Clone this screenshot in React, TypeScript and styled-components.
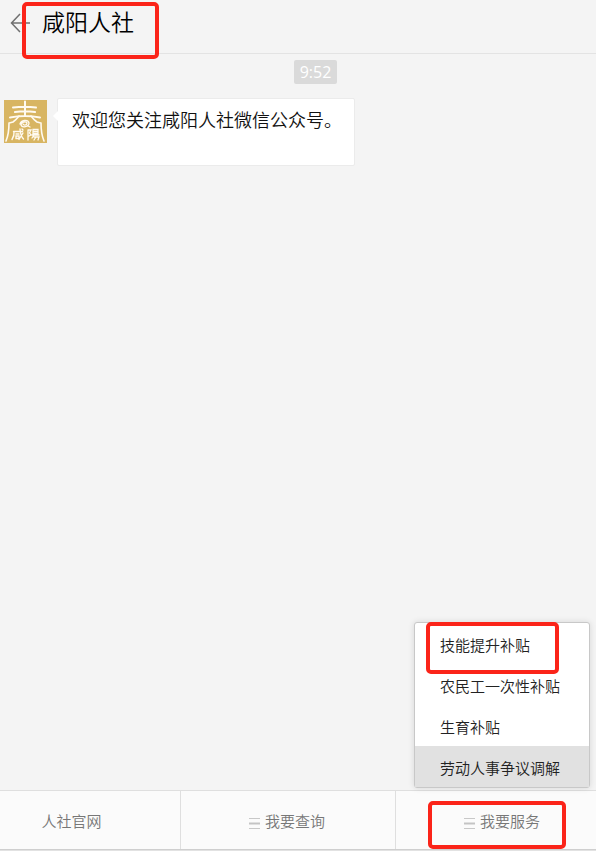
import React from "react";
import styled, { createGlobalStyle, css } from "styled-components";

const GlobalStyle = createGlobalStyle`
  *, *::before, *::after { box-sizing: border-box; }
  body {
    margin: 0;
    background: #f4f4f4;
    color: #111;
    font-family: "Noto Sans CJK SC", "Noto Sans", sans-serif;
    font-weight: 350;
  }
  button { font: inherit; color: inherit; }
`;

const Page = styled.div`
  display: flex;
  flex-direction: column;
  min-height: 100vh;
  overflow: hidden;
`;

const Header = styled.header`
  display: flex;
  align-items: flex-start;
  height: 54px;
  padding-left: 10px;
  border-bottom: 1px solid #e3e3e3;
`;

const BackButton = styled.button`
  display: flex;
  margin: 12px 0 0;
  padding: 0;
  border: 0;
  background: none;
  color: #707070;
`;

const Mark = styled.span<{ $inset: string }>`
  position: absolute;
  inset: ${(p) => p.$inset};
  border: 4px solid #fb2419;
  border-radius: 5px;
  pointer-events: none;
`;

const Title = styled.h1`
  position: relative;
  margin: 4px 0 0 10px;
  font-size: 23px;
  line-height: 34px;
  font-weight: 350;
  color: #000;
`;

const Chat = styled.main`
  display: flex;
  flex: 1;
  flex-direction: column;
  padding: 6px 4px;
`;

const Time = styled.time`
  align-self: center;
  margin-left: 35px;
  padding: 0 6px;
  border-radius: 2px;
  background: #dadada;
  color: #fff;
  font: 400 16px/24px "Open Sans", "Noto Sans", sans-serif;
`;

const Message = styled.div`
  display: flex;
  align-items: flex-start;
  gap: 10px;
  margin-top: 14px;
`;

const Avatar = styled.svg`
  flex: none;
  width: 43px;
  height: 43px;
  margin-top: 2px;
`;

const Bubble = styled.p`
  position: relative;
  min-height: 68px;
  margin: 0;
  padding: 7px 12px 0 14px;
  border: 1px solid #ebebeb;
  border-radius: 2px;
  background: #fff;
  font-size: 18px;
  line-height: 27px;

  &::before {
    content: "";
    position: absolute;
    top: 12px;
    left: -5px;
    border: solid transparent;
    border-width: 5px 5px 5px 0;
    border-right-color: #fff;
  }
`;

const Bar = styled.nav`
  display: grid;
  grid-template-columns: repeat(3, 1fr);
  height: 59px;
  margin: 0 -14px 0 -35px;
  border-top: 1px solid #dfdfdf;
  background: #fbfbfb;
`;

const Tab = styled.div`
  position: relative;
  display: flex;
  & + & { border-left: 1px solid #dfdfdf; }
`;

const TabButton = styled.button`
  display: flex;
  flex: 1;
  align-items: center;
  justify-content: center;
  gap: 5px;
  padding: 2px 2px 0 0;
  border: 0;
  background: none;
  color: #777;
  font-size: 15px;
  line-height: 22px;
`;

const MenuIcon = styled.svg`
  width: 11px;
  height: 11px;
  margin-top: 4px;
`;

const Menu = styled.ul`
  position: absolute;
  right: 20px;
  bottom: 61px;
  width: 176px;
  margin: 0;
  padding: 0;
  border: 1px solid #c8c8c8;
  border-radius: 3px;
  background: #fff;
  box-shadow: 0 0 6px rgba(0, 0, 0, 0.12);
  list-style: none;
`;

const MenuItem = styled.li<{ $active?: boolean }>`
  position: relative;
  ${(p) => p.$active && css`background: #e1e1e1;`}
`;

const MenuButton = styled.button`
  display: block;
  width: 100%;
  padding: 3px 0 0 25px;
  border: 0;
  background: none;
  color: #222;
  font-size: 15px;
  line-height: 38px;
  text-align: left;
`;

const Floor = styled.footer`
  height: 2px;
  background: #e2e2e2;
  border-top: 1px solid #cfcfcf;
`;

const services = ["技能提升补贴", "农民工一次性补贴", "生育补贴", "劳动人事争议调解"];

function Lines() {
  return (
    <MenuIcon viewBox="0 0 11 11" aria-hidden="true">
      <path d="M0 .5h11M0 10.5h11" stroke="#c8c8c8" fill="none" />
      <path d="M0 5.500h11" stroke="#c4c4c4" strokeWidth="2" fill="none" />
    </MenuIcon>
  );
}

function Logo() {
  return (
    <Avatar viewBox="0 0 43 43" role="img" aria-label="咸阳人社">
      <path fill="#d8b562" d="M0 0h43v43H0z" />
      <g fill="none" stroke="#fffaf0" strokeLinecap="round">
        <path strokeWidth="2" d="M9 7.500Q21 6 32 7.500M11 12Q21 10.500 31 12M6 17.500Q21 14.500 36 17.500M21 1.500V16" />
        <path strokeWidth="1.600" d="M15 16Q12 20 9 22L5 23Q5 34 2 41M27 16Q30 20 33 22L37 23Q37 34 40 41" />
        <path strokeWidth="1.300" d="M16 24c1-4 8-5 9-1c0 4-7 5-8 2c0-3 5-4 6-2c0 2-3 3-4 1M24 26l2 1" />
        <path strokeWidth="1.400" d="M9.500 31.500h9M10 31.500Q10.500 36 8 39.500M12 34h3M12 36h3v2.500h-3zM16 29Q16.500 36 19.500 39M19 33l-4 6.500M18 29l1 1" />
        <path strokeWidth="1.300" d="M24 30v10M24 30h3l-1.500 3l1.500 2l-2 1M29 29.500h5v4h-5zM29 31.500h5M28 35h7M30 35l-2 3M30 37h5l-1 3M32 37l-2 3" />
      </g>
    </Avatar>
  );
}

export default function App() {
  return (
    <Page>
      <GlobalStyle />
      <Header>
        <BackButton type="button" aria-label="返回">
          <svg width="22" height="22" viewBox="0 0 22 22" fill="none" stroke="currentColor" strokeWidth="1.500">
            <path d="M20 11H2M10 2L1.500 11L10 20" />
          </svg>
        </BackButton>
        <Title>
          咸阳人社
          <Mark $inset="-2px -25px -21px -20px" />
        </Title>
      </Header>
      <Chat>
        <Time>9:52</Time>
        <Message>
          <Logo />
          <Bubble>欢迎您关注咸阳人社微信公众号。</Bubble>
        </Message>
      </Chat>
      <Bar>
        <Tab>
          <TabButton type="button">人社官网</TabButton>
        </Tab>
        <Tab>
          <TabButton type="button"><Lines />我要查询</TabButton>
        </Tab>
        <Tab>
          <TabButton type="button"><Lines />我要服务</TabButton>
          <Mark $inset="10px 44px 0 32px" />
          <Menu>
            {services.map((name, i) => (
              <MenuItem key={name} $active={i === services.length - 1}>
                <MenuButton type="button">{name}</MenuButton>
                {i === 0 && <Mark $inset="-1px 30px -10px 11px" />}
              </MenuItem>
            ))}
          </Menu>
        </Tab>
      </Bar>
      <Floor />
    </Page>
  );
}
